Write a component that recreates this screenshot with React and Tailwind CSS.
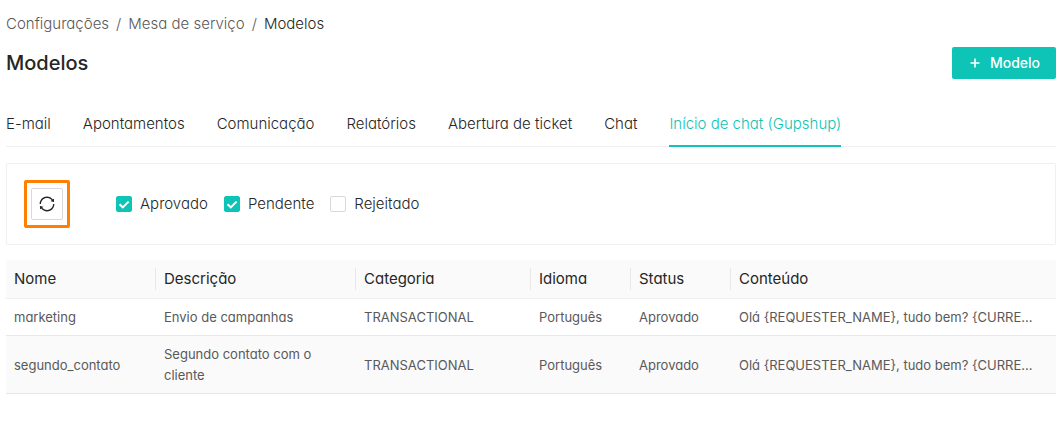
import { useState } from "react";
import { AiOutlineSync } from "react-icons/ai";

const tabs = [
  "E-mail",
  "Apontamentos",
  "Comunicação",
  "Relatórios",
  "Abertura de ticket",
  "Chat",
  "Início de chat (Gupshup)",
];

const columns = [
  { title: "Nome", width: "w-[150px]" },
  { title: "Descrição", width: "w-[200px]" },
  { title: "Categoria", width: "w-[175px]" },
  { title: "Idioma", width: "w-[100px]" },
  { title: "Status", width: "w-[100px]" },
  { title: "Conteúdo", width: "" },
];

const rows = [
  ["marketing", "Envio de campanhas", "TRANSACTIONAL", "Português", "Aprovado", "Olá {REQUESTER_NAME}, tudo bem? {CURRE..."],
  ["segundo_contato", "Segundo contato com o cliente", "TRANSACTIONAL", "Português", "Aprovado", "Olá {REQUESTER_NAME}, tudo bem? {CURRE..."],
];

function Checkbox({ label, initial }) {
  const [checked, setChecked] = useState(initial);
  return (
    <label className="flex cursor-pointer items-center gap-2">
      <span className="relative flex size-4">
        <input
          type="checkbox"
          checked={checked}
          onChange={() => setChecked(!checked)}
          className="peer size-4 appearance-none rounded-xs border border-[#d9d9d9] bg-white checked:border-[#0dc4b6] checked:bg-[#0dc4b6]"
        />
        <svg
          viewBox="0 0 16 16"
          className="pointer-events-none absolute inset-0 hidden size-4 fill-none stroke-white stroke-2 peer-checked:block"
        >
          <path d="M3.6 8.2 6.8 11.4 12.6 5.6" />
        </svg>
      </span>
      {label}
    </label>
  );
}

export default function App() {
  const [active, setActive] = useState(tabs.length - 1);
  return (
    <main className="bg-white pt-3 pr-[7px] pb-11 pl-1.5 font-['Inter','Liberation_Sans',sans-serif] text-[15px] font-light text-[#262626] [font-feature-settings:'cv11']">
      <nav aria-label="Trilha" className="flex h-6 items-center gap-[7px] text-[#595959]">
        <a href="#configuracoes">Configurações</a>
        <span>/</span>
        <a href="#mesa">Mesa de serviço</a>
        <span>/</span>
        <span className="text-[#262626]">Modelos</span>
      </nav>

      <header className="mt-[11px] flex h-8 items-center justify-between">
        <h1 className="text-xl font-medium">Modelos</h1>
        <button className="flex h-8 items-center gap-2 rounded-xs bg-[#0dc4b6] px-4 text-sm font-medium text-white">
          <svg viewBox="0 0 14 14" className="size-3.5 fill-none stroke-white stroke-[1.6]">
            <path d="M7 2.5v9M2.5 7h9" />
          </svg>
          Modelo
        </button>
      </header>

      <div role="tablist" className="mt-[22px] flex gap-8 border-b border-[#f0f0f0]">
        {tabs.map((tab, i) => (
          <button
            key={tab}
            role="tab"
            aria-selected={i === active}
            onClick={() => setActive(i)}
            className={
              i === active
                ? "-mb-px h-[46px] border-b-2 border-[#0dc4b6] pt-0.5 whitespace-nowrap text-[#0dc4b6]"
                : "-mb-px h-[46px] border-b-2 border-transparent pt-0.5 whitespace-nowrap"
            }
          >
            {tab}
          </button>
        ))}
      </div>

      <section className="mt-4 flex items-center gap-[46px] rounded-xs border border-[#f0f0f0] px-[17px] py-4">
        <div className="rounded-xs border-3 border-[#ff8000] px-1 py-[5px]">
          <button
            aria-label="Atualizar"
            className="flex size-8 items-center justify-center rounded-xs border border-[#d9d9d9]"
          >
            <AiOutlineSync className="size-[18px]" />
          </button>
        </div>
        <div className="flex gap-4">
          <Checkbox label="Aprovado" initial={true} />
          <Checkbox label="Pendente" initial={true} />
          <Checkbox label="Rejeitado" initial={false} />
        </div>
      </section>

      <table className="mt-[15px] w-full table-fixed border-separate border-spacing-0 text-left">
        <thead className="bg-[#fafafa]">
          <tr>
            {columns.map((c, i) => (
              <th key={c.title} className={`${c.width} border-b border-[#f0f0f0] py-2 font-normal`}>
                <div
                  className={
                    i < columns.length - 1
                      ? "border-r border-[#e8e8e8] px-2 leading-[22px]"
                      : "px-2 leading-[22px]"
                  }
                >
                  {c.title}
                </div>
              </th>
            ))}
          </tr>
        </thead>
        <tbody className="text-[13px] leading-[21px] font-normal text-[#595959]">
          {rows.map((row) => (
            <tr key={row[0]} className="even:bg-[#fafafa]">
              {row.map((cell, i) => (
                <td
                  key={i}
                  className={
                    i === 5
                      ? "truncate border-b border-[#e8e8e8] px-2 pt-2 pb-[7px]"
                      : "border-b border-[#e8e8e8] px-2 pt-2 pb-[7px]"
                  }
                >
                  {cell}
                </td>
              ))}
            </tr>
          ))}
        </tbody>
      </table>
    </main>
  );
}
